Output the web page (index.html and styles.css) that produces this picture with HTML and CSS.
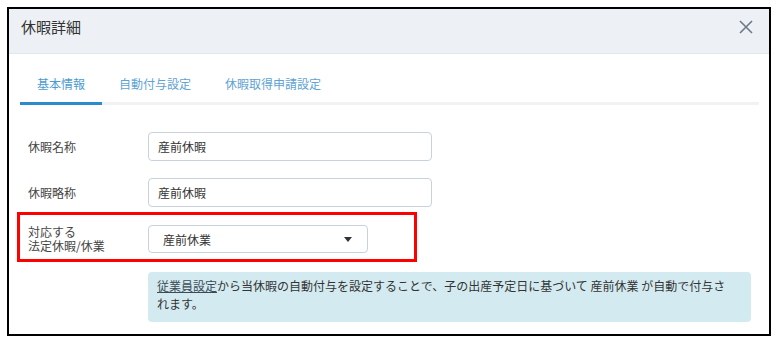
FILE: index.html
```html
<!DOCTYPE html>
<html lang="ja">
<head>
    <title>休暇詳細</title>
    <meta charset="utf-8">
    <link rel="stylesheet" href="styles.css">
</head>

<body>
    <div id="dialogo">
        <div class="cabecalho">
            <h1>休暇詳細</h1>
            <svg class="fechar" width="14" height="14" viewBox="0 0 14 14">
                <path d="M1 1 L13 13 M13 1 L1 13" stroke="#6b7988" stroke-width="1.6" fill="none"/>
            </svg>
        </div>

        <div class="corpo">
            <div class="abas">
                <div class="aba ativa">基本情報</div>
                <div class="aba">自動付与設定</div>
                <div class="aba">休暇取得申請設定</div>
            </div>

            <div class="linha">
                <label>休暇名称</label>
                <div class="campo">産前休暇</div>
            </div>
            <div class="linha">
                <label>休暇略称</label>
                <div class="campo">産前休暇</div>
            </div>
            <div class="linha destaque">
                <label>対応する<br>法定休暇/休業</label>
                <div class="selecao">産前休業 <span class="seta"></span></div>
            </div>

            <div class="aviso">
                <a href="#">従業員設定</a>から当休暇の自動付与を設定することで、子の出産予定日に基づいて 産前休業 が自動で付与されます。
            </div>
        </div>
    </div>
</body>
</html>
```

FILE: styles.css
```css
body {
    margin: 0;
    background: #fff;
    font-family: "Noto Sans CJK JP", "Noto Sans", sans-serif;
    color: #333;
}

#dialogo {
    box-sizing: border-box;
    width: 764px;
    height: 329px;
    margin: 7px;
    border: 2px solid #000;
    overflow: hidden;
}

.cabecalho {
    display: flex;
    justify-content: space-between;
    align-items: flex-start;
    height: 45px;
    box-sizing: border-box;
    padding: 7px 16px 0 12px;
    background: #edf1f5;
    border-bottom: 1px solid #e1e6eb;
}

.cabecalho h1 {
    margin: 0;
    font-size: 15px;
    font-weight: normal;
    line-height: 21px;
    color: #333;
}

.fechar {
    margin-top: 4px;
}

.corpo {
    padding: 0 10px 0 11px;
}

.abas {
    display: flex;
    margin-top: 20px;
    border-bottom: 3px solid #f0f2f4;
}

.aba {
    padding: 0 17px 8px;
    font-size: 12px;
    line-height: 20px;
    color: #5ea3d3;
    border-bottom: 3px solid transparent;
    margin-bottom: -3px;
}

.aba.ativa {
    color: #4b9bd1;
    border-bottom-color: #2b8ccc;
}

.linha {
    display: flex;
    align-items: center;
    padding-left: 8px;
    margin-top: 17px;
}

.abas + .linha {
    margin-top: 27px;
}

.linha label {
    width: 120px;
    font-size: 12px;
    line-height: 14px;
    color: #444;
}

.campo {
    box-sizing: border-box;
    width: 284px;
    height: 29px;
    padding-left: 9px;
    border: 1px solid #c8d2dc;
    border-radius: 4px;
    font-size: 12px;
    line-height: 27px;
}

.destaque {
    width: 400px;
    box-sizing: border-box;
    margin: 5px 0 0 -3px;
    padding: 10px 0 6px 8px;
    border: 3px solid #f00;
}

.selecao {
    box-sizing: border-box;
    display: flex;
    justify-content: space-between;
    align-items: center;
    width: 220px;
    height: 28px;
    padding: 0 15px 0 14px;
    border: 1px solid #c8d2dc;
    border-radius: 4px;
    font-size: 12px;
}

.seta {
    width: 0;
    height: 0;
    border-left: 4px solid transparent;
    border-right: 4px solid transparent;
    border-top: 5px solid #333;
}

.aviso {
    margin: 10px 8px 0 128px;
    padding: 5px 14px 9px 9px;
    background: #d3ebf0;
    border-radius: 4px;
    font-size: 12px;
    line-height: 18px;
    color: #333;
}

.aviso a {
    color: #3d4a57;
    text-decoration: underline;
}
```
